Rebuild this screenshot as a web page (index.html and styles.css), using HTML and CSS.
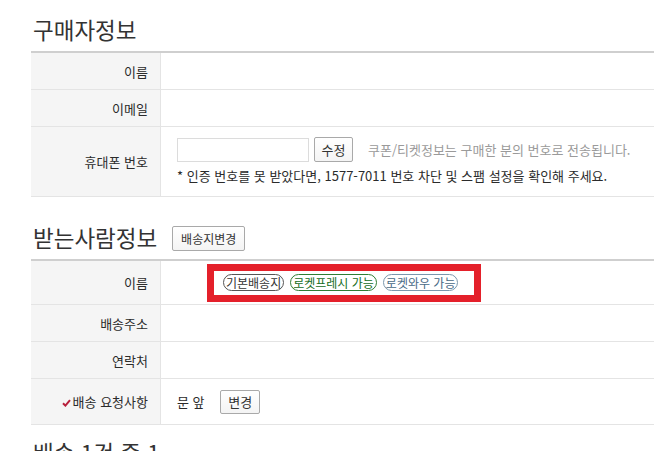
FILE: index.html
```html
<!DOCTYPE html>
<html lang="ko">
<head>
    <meta charset="UTF-8">
    <meta name="viewport" content="width=device-width, initial-scale=1.0">
    <title>주문/결제</title>
    <link rel="stylesheet" href="styles.css">
</head>
<body>
    <div class="page">
        <!-- 구매자정보 -->
        <div class="section">
            <div class="section-head">
                <h2>구매자정보</h2>
            </div>
            <table class="info">
                <tr class="row-s">
                    <th>이름</th>
                    <td></td>
                </tr>
                <tr class="row-s">
                    <th>이메일</th>
                    <td></td>
                </tr>
                <tr class="row-phone">
                    <th>휴대폰 번호</th>
                    <td>
                        <div class="phone-line">
                            <input type="text" class="phone-input">
                            <button class="btn">수정</button>
                            <span class="hint">쿠폰/티켓정보는 구매한 분의 번호로 전송됩니다.</span>
                        </div>
                        <p class="note">* 인증 번호를 못 받았다면, 1577-7011 번호 차단 및 스팸 설정을 확인해 주세요.</p>
                    </td>
                </tr>
            </table>
        </div>

        <!-- 받는사람정보 -->
        <div class="section section-2">
            <div class="section-head">
                <h2>받는사람정보</h2>
                <button class="btn btn-small">배송지변경</button>
            </div>
            <table class="info">
                <tr class="row-name">
                    <th>이름</th>
                    <td>
                        <div class="highlight">
                            <span class="badge badge-default">기본배송지</span>
                            <span class="badge badge-fresh">로켓프레시 가능</span>
                            <span class="badge badge-wow">로켓와우 가능</span>
                        </div>
                    </td>
                </tr>
                <tr class="row-s">
                    <th>배송주소</th>
                    <td></td>
                </tr>
                <tr class="row-s">
                    <th>연락처</th>
                    <td></td>
                </tr>
                <tr class="row-req">
                    <th>
                        <svg class="check" width="9" height="8" viewBox="0 0 9 8"><path d="M1 4.2 L3.4 6.6 L8 1.2" fill="none" stroke="#b8203c" stroke-width="2"/></svg>배송 요청사항
                    </th>
                    <td>
                        <span class="req-text">문 앞</span>
                        <button class="btn btn-change">변경</button>
                    </td>
                </tr>
            </table>
        </div>

        <div class="section section-3">
            <div class="section-head">
                <h2>배송 1건 중 1</h2>
            </div>
        </div>
    </div>
</body>
</html>
```

FILE: styles.css
```css
html, body {
    overflow: hidden;
}

body {
    margin: 0;
    font-family: "Noto Sans CJK KR", "Noto Sans", sans-serif;
    font-size: 13px;
    color: #2b2b2b;
    background: #fff;
}

.page {
    padding: 14px 0 0 31px;
}

.section-head {
    display: flex;
    align-items: center;
    height: 30px;
    margin: 0 0 7px 2px;
}

h2 {
    margin: 0;
    font-size: 22.5px;
    font-weight: normal;
    line-height: 30px;
    color: #333;
}

.section-2 {
    margin-top: 25px;
}

.section-3 {
    margin-top: 12px;
}

.info {
    width: 100%;
    border-collapse: collapse;
    border-top: 2px solid #cfcfcf;
}

.info tr {
    border-bottom: 1px solid #e4e4e4;
}

.info th {
    width: 117px;
    padding: 0 12px 0 0;
    background: #f5f5f5;
    border-right: 1px solid #e4e4e4;
    text-align: right;
    font-weight: normal;
    color: #2b2b2b;
    white-space: nowrap;
}

.info td {
    padding: 0 16px;
}

.row-s th, .row-s td {
    height: 36px;
}

.row-phone th {
    height: 69px;
}

.row-phone td {
    height: 59px;
    padding-top: 10px;
    padding-bottom: 0;
    vertical-align: top;
}

.row-name th, .row-name td {
    height: 43px;
}

.row-req th, .row-req td {
    height: 45px;
}

.phone-line {
    display: flex;
    align-items: center;
}

.phone-input {
    width: 132px;
    height: 24px;
    box-sizing: border-box;
    border: 1px solid #dcdcdc;
    margin: 0;
    padding: 0 4px;
}

.btn {
    font-family: inherit;
    font-size: 13px;
    color: #333;
    background: linear-gradient(#fff, #f4f4f4);
    border: 1px solid #a9a9a9;
    border-radius: 2px;
    height: 25px;
    padding: 0 9px;
    margin: 0;
    line-height: 23px;
}

.phone-line .btn {
    width: 39px;
    padding: 0;
    margin-left: 5px;
}

.hint {
    margin-left: 15px;
    color: #9a9a9a;
}

.note {
    margin: 5px 0 0;
    line-height: 18px;
}

.btn-small {
    font-size: 12px;
    width: 73px;
    padding: 0;
    margin-left: 15px;
    margin-top: 2px;
}

.highlight {
    display: inline-flex;
    align-items: center;
    gap: 6px;
    margin-left: 30px;
    border: 7px solid #e4202a;
    padding: 0 10px 0 9px;
    height: 24px;
    width: 241px;
}

.badge {
    display: inline-block;
    font-size: 12px;
    line-height: 15px;
    padding: 0 2px;
    border: 1px solid #555;
    border-radius: 9px;
    white-space: nowrap;
}

.badge-default {
    color: #333;
    border-color: #555;
}

.badge-fresh {
    color: #146c1c;
    border-color: #2f7d34;
}

.badge-wow {
    color: #486a86;
    border-color: #7b97ad;
}

.check {
    margin-right: 2px;
    vertical-align: 0;
}

.req-text {
    display: inline-block;
    vertical-align: middle;
}

.btn-change {
    width: 40px;
    height: 24px;
    padding: 0;
    margin-left: 12px;
    vertical-align: middle;
    line-height: 22px;
}
```
